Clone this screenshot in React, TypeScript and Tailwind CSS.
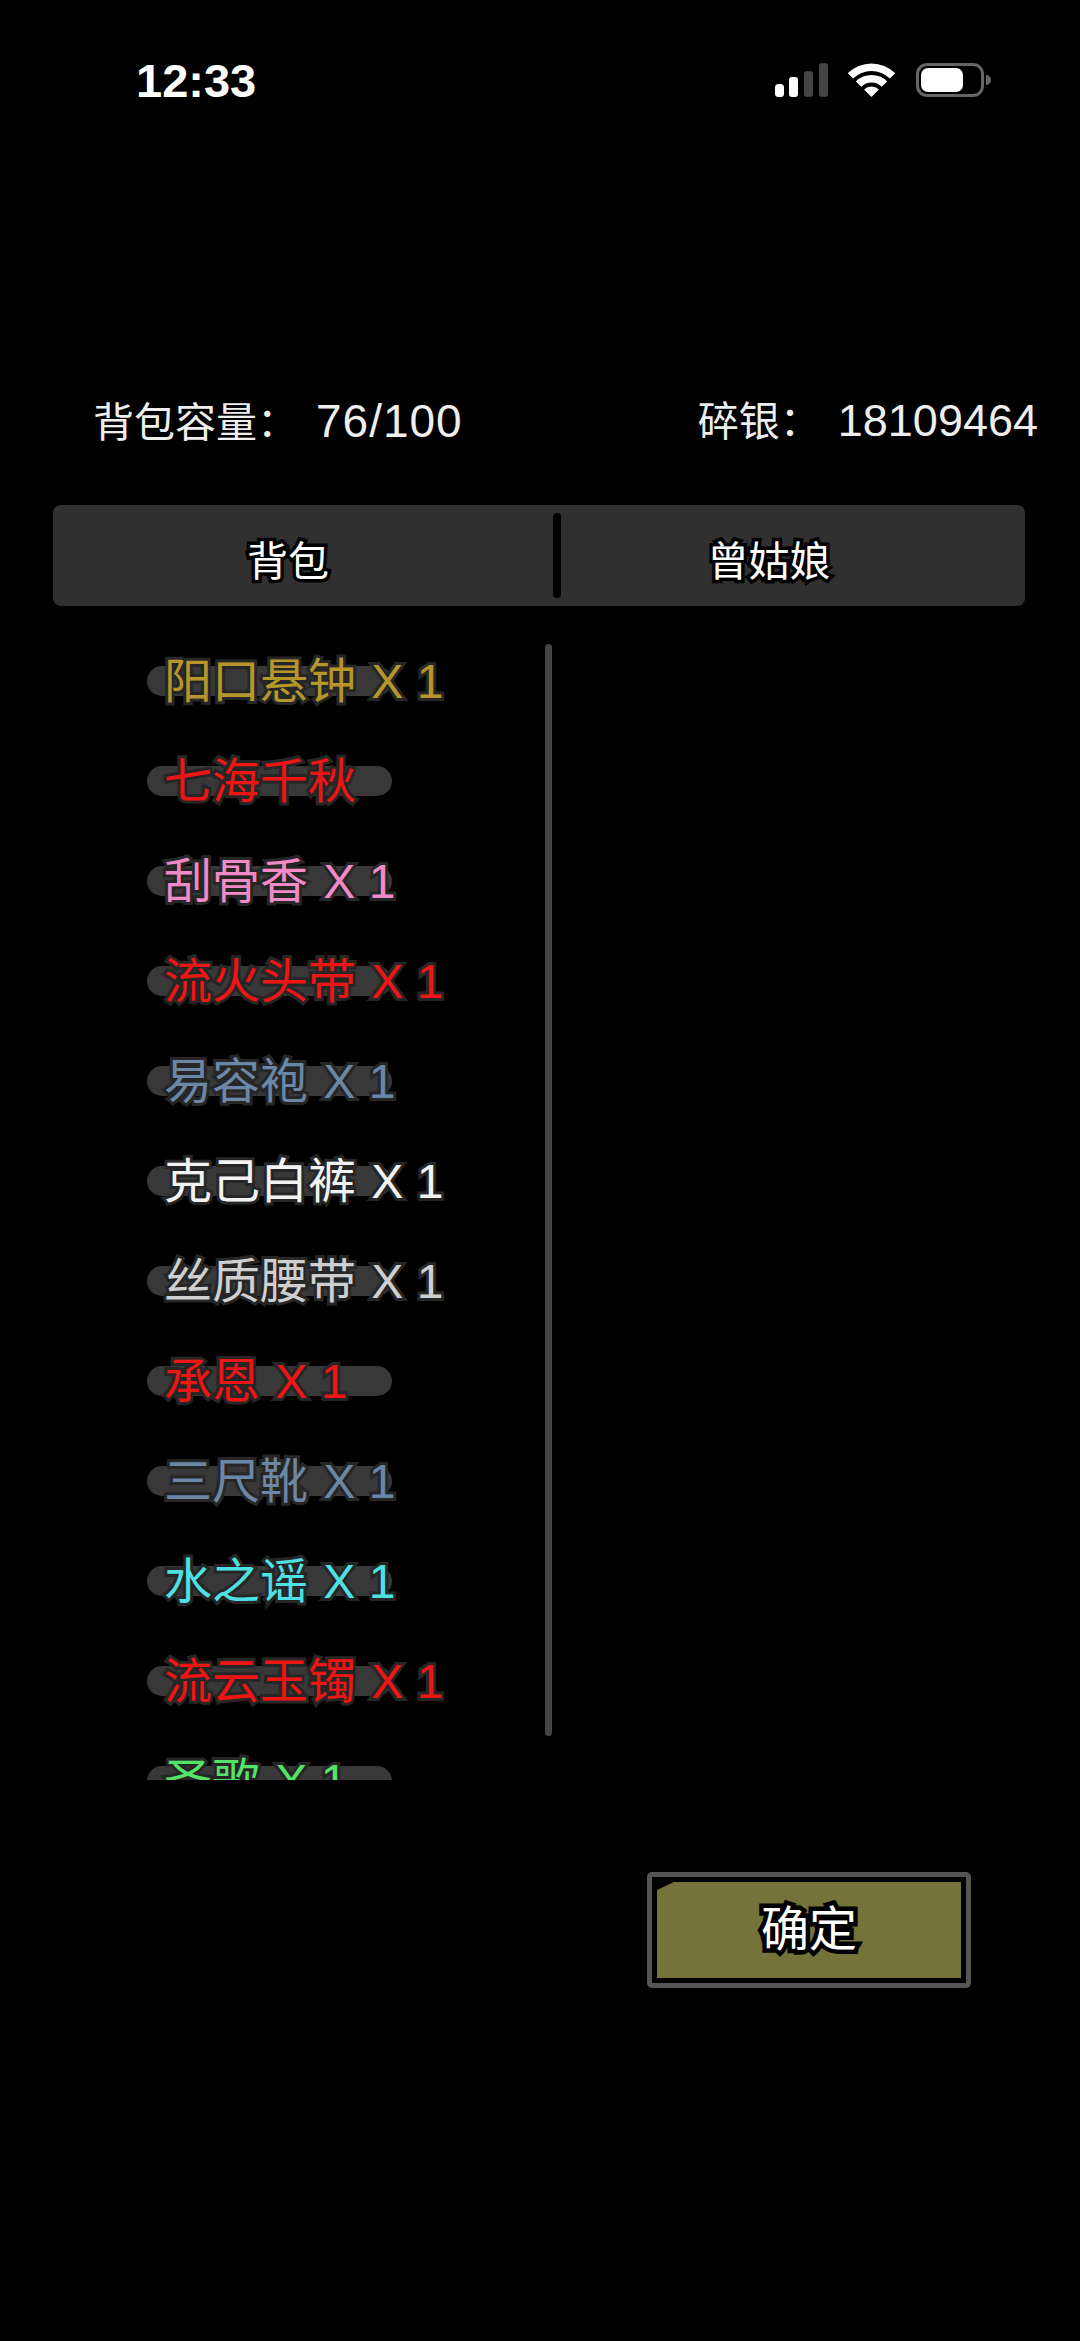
import React from 'react';

const cjk = "font-['Liberation_Sans','Noto_Sans_CJK_SC',sans-serif]";

interface BagItem {
  name: string;
  count?: string;
  color: string;
}

const items: BagItem[] = [
  { name: '阳口悬钟', count: ' X 1', color: 'text-[#b6962b]' },
  { name: '七海千秋', color: 'text-[#ee1515]' },
  { name: '刮骨香', count: ' X 1', color: 'text-[#f28ac6]' },
  { name: '流火头带', count: ' X 1', color: 'text-[#ee1515]' },
  { name: '易容袍', count: ' X 1', color: 'text-[#6c87a6]' },
  { name: '克己白裤', count: ' X 1', color: 'text-[#f2f2f2]' },
  { name: '丝质腰带', count: ' X 1', color: 'text-[#cfcfcf]' },
  { name: '承恩', count: ' X 1', color: 'text-[#ee1515]' },
  { name: '三尺靴', count: ' X 1', color: 'text-[#6c87a6]' },
  { name: '水之谣', count: ' X 1', color: 'text-[#4fe0e4]' },
  { name: '流云玉镯', count: ' X 1', color: 'text-[#ee1515]' },
  { name: '圣歌', count: ' X 1', color: 'text-[#55e268]' },
];

const StatusIcons = () => (
  <div className="flex items-center">
    {/* signal */}
    <svg width="53" height="34" viewBox="0 0 53 34">
      <rect x="0" y="21" width="9" height="13" rx="3.5" fill="#fff" />
      <rect x="14" y="14" width="9" height="20" rx="3" fill="#fff" />
      <rect x="29" y="8" width="9" height="26" rx="3" fill="#444" />
      <rect x="44" y="0" width="9" height="34" rx="3" fill="#444" />
    </svg>
    {/* wifi */}
    <svg className="ml-[20px]" width="47" height="34" viewBox="0 0 47 34">
      <path d="M-0.2 10.3 A33.5 33.5 0 0 1 47.2 10.3 L41.9 15.6 A26 26 0 0 0 5.1 15.6 Z" fill="#fff" />
      <path d="M7.9 18.4 A22 22 0 0 1 39.1 18.4 L33.75 23.75 A14.5 14.5 0 0 0 13.25 23.75 Z" fill="#fff" />
      <path d="M16.1 26.6 A10.5 10.5 0 0 1 30.9 26.6 L23.5 34 Z" fill="#fff" />
    </svg>
    {/* battery */}
    <div className="ml-[21px] flex items-center">
      <div className="w-[68px] h-[34px] rounded-[11px] border-[3px] border-[#666] p-[2px]">
        <div className="w-[42px] h-full rounded-[7px] bg-white" />
      </div>
      <div className="ml-[2px] w-[5px] h-[10px] rounded-r-full bg-[#666]" />
    </div>
  </div>
);

export default function App() {
  return (
    <div className={`w-[1080px] h-[2341px] bg-black flex flex-col overflow-hidden text-white ${cjk}`}>
      {/* Status bar */}
      <div className="h-[62px] mt-[49px] flex items-center justify-between pl-[136px] pr-[89px]">
        <span className="text-[47px] leading-none font-bold">12:33</span>
        <StatusIcons />
      </div>

      {/* Capacity and money */}
      <div className="mt-[277px] h-[66px] flex items-center justify-between pl-[93px] pr-[42px] text-[41px] text-[#eeeeee]">
        <div>
          背包容量：<span className="text-[46px] ml-[18px] tracking-[1px]">76/100</span>
        </div>
        <div>
          碎银：<span className="text-[45px] ml-[17px]">18109464</span>
        </div>
      </div>

      {/* Tabs */}
      <div className="ml-[53px] mt-[51px] w-[972px] h-[101px] rounded-lg bg-[#303030] flex items-center text-[41px] [paint-order:stroke_fill] [-webkit-text-stroke:7px_#000]">
        <div className="w-[500px] pr-[30px] pt-[14px] text-center">背包</div>
        <div className="w-[8px] h-[85px] rounded-full bg-black" />
        <div className="flex-1 pr-[48px] pt-[14px] text-center">曾姑娘</div>
      </div>

      {/* Item list */}
      <div className="ml-[147px] mt-[31px] w-[405px] h-[1143px] flex overflow-hidden">
        <div className="w-[398px] h-full overflow-hidden pt-[29px]">
          {items.map((item) => (
            <div key={item.name} className="relative h-[100px] w-[245px] flex items-start">
              <div className="w-[245px] h-[30px] rounded-full bg-[#383838]" />
              <div
                className={`absolute left-[17px] top-[-20px] whitespace-pre text-[48px] leading-[72px] ${item.color} [paint-order:stroke_fill] [-webkit-text-stroke:6px_#262626]`}
              >
                {item.name}
                {item.count && <span className="ml-[2px]">{item.count}</span>}
              </div>
            </div>
          ))}
        </div>
        <div className="w-[7px] h-[1092px] mt-[7px] rounded-full bg-[#444]" />
      </div>

      {/* Confirm */}
      <div className="ml-[647px] mt-[92px] w-[324px] h-[116px] rounded-[5px] border-[5px] border-[#555] bg-black p-[5px]">
        <div className="h-full flex items-center justify-center bg-[#75733a] [clip-path:polygon(17px_0,100%_0,100%_100%,0_100%,0_8px)] text-[48px] [paint-order:stroke_fill] [-webkit-text-stroke:9px_#000]">
          确定
        </div>
      </div>
    </div>
  );
}
